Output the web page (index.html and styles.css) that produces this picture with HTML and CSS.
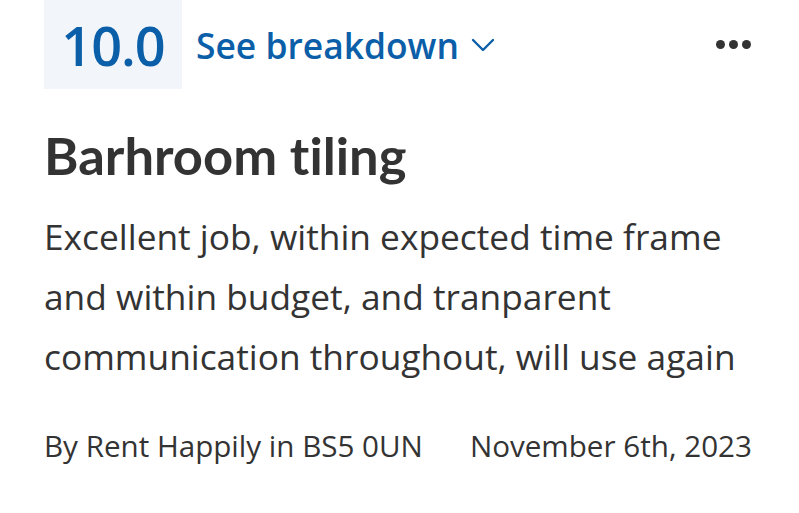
FILE: index.html
```html
<!DOCTYPE html>
<html>
<head>
<meta charset="utf-8">
<link rel="stylesheet" href="styles.css">
</head>
<body>
<div class="card">
  <div class="header">
    <div class="score">10.0</div>
    <a class="breakdown">See breakdown
      <svg class="chev" width="24" height="16" viewBox="0 0 24 16"><path d="M2 3 L12 13 L22 3" fill="none" stroke="#0b5ea8" stroke-width="2.4" stroke-linecap="round" stroke-linejoin="round"/></svg>
    </a>
    <div class="more"><span></span><span></span><span></span></div>
  </div>
  <h1 class="title">Barhroom tiling</h1>
  <p class="body">Excellent job, within expected time frame and within budget, and tranparent communication throughout, will use again</p>
  <div class="meta">
    <span>By Rent Happily in BS5 0UN</span>
    <span>November 6th, 2023</span>
  </div>
</div>
</body>
</html>
```
FILE: styles.css
```css
html, body { margin: 0; padding: 0; background: #fff; }
.card { padding: 0 46px 0 44px; font-family: "Open Sans", sans-serif; color: #333; font-variant-ligatures: none; }
.header { display: flex; align-items: center; height: 89px; }
.score { background: #f2f6fb; height: 89px; width: 138px; box-sizing: border-box; display: flex; align-items: center; justify-content: center; font-size: 54px; font-weight: 600; color: #0b5ea8; letter-spacing: -1px; }
.breakdown { margin-left: 14px; display: flex; align-items: center; font-size: 35.4px; font-weight: 600; color: #0b5ea8; }
.chev { margin-left: 12px; }
.more { margin-left: auto; display: flex; gap: 4px; margin-right: 2px; }
.more span { width: 9px; height: 9px; border-radius: 50%; background: #333; }
.title { margin: 36px 0 0 0; font-family: Lato, sans-serif; font-weight: 700; font-size: 52.5px; line-height: 60px; color: #333; font-variant-ligatures: none; }
.body { margin: 21px 0 0 0; font-size: 35.3px; line-height: 60px; color: #333; }
.meta { margin-top: 40px; display: flex; gap: 47px; font-size: 29.6px; line-height: 40px; color: #333; }
```
